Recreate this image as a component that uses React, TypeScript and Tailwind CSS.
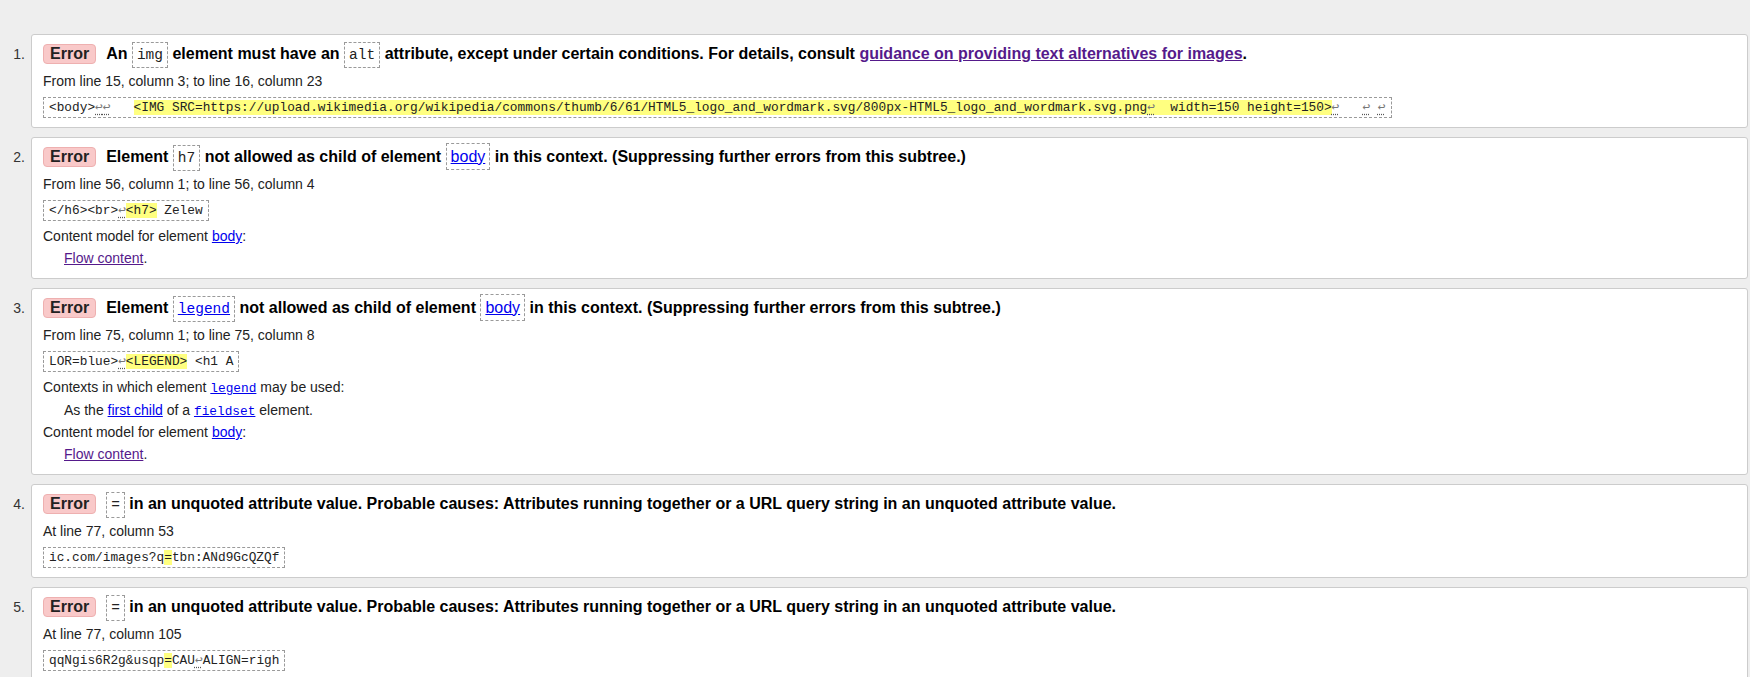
import type { ReactNode } from "react";

// ---- small inline helpers ----
function Nl() {
  return (
    <span className="font-['DejaVu_Sans_Mono',monospace] text-[12.8px] leading-[0] text-[#777] underline decoration-dotted decoration-[#555] underline-offset-[3px]">
      ↩
    </span>
  );
}

function Hl({ children }: { children: ReactNode }) {
  return <span className="bg-[#ffff80]">{children}</span>;
}

// dashed box used inside the bold message line
function Box({ children, mono = true }: { children: ReactNode; mono?: boolean }) {
  return (
    <span
      className={
        mono
          ? "border border-dashed border-[#9a9a9a] px-[4px] py-[4px] font-['Liberation_Mono','DejaVu_Sans_Mono',monospace] text-[14.5px] font-normal text-[#222]"
          : "border border-dashed border-[#9a9a9a] px-[4px] py-[4px] font-normal"
      }
    >
      {children}
    </span>
  );
}

function Extract({ children }: { children: ReactNode }) {
  return (
    <div className="mt-[5px] flex">
      <code className="border border-dashed border-[#9a9a9a] px-[5px] py-[2px] font-['Liberation_Mono','DejaVu_Sans_Mono',monospace] text-[12.8px] leading-[15px] whitespace-pre text-[#222]">
        {children}
      </code>
    </div>
  );
}

const link = "text-[#0000ee] underline";
const visited = "text-[#551a8b] underline";
const monoLink =
  "font-['Liberation_Mono','DejaVu_Sans_Mono',monospace] text-[12.8px] font-normal text-[#0000ee] underline";

type Item = {
  title: ReactNode;
  where: string;
  extract: ReactNode;
  extra?: ReactNode;
};

const items: Item[] = [
  {
    title: (
      <>
        An <Box>img</Box> element must have an <Box>alt</Box> attribute, except under certain conditions. For details, consult <a className={visited}>guidance on providing text alternatives for images</a>.
      </>
    ),
    where: "From line 15, column 3; to line 16, column 23",
    extract: (
      <>
        {"<body>"}
        <Nl />
        <Nl />
        {"   "}
        <Hl>
          {"<IMG SRC=https://upload.wikimedia.org/wikipedia/commons/thumb/6/61/HTML5_logo_and_wordmark.svg/800px-HTML5_logo_and_wordmark.svg.png"}
          <Nl />
          {"  width=150 height=150>"}
        </Hl>
        <Nl />
        {"   "}
        <Nl />
        {" "}
        <Nl />
      </>
    ),
  },
  {
    title: (
      <>
        Element <Box>h7</Box> not allowed as child of element <Box mono={false}><a className={link}>body</a></Box> in this context. (Suppressing further errors from this subtree.)
      </>
    ),
    where: "From line 56, column 1; to line 56, column 4",
    extract: (
      <>
        {"</h6><br>"}
        <Nl />
        <Hl>{"<h7>"}</Hl>
        {" Zelew"}
      </>
    ),
    extra: (
      <>
        <p>
          Content model for element <a className={link}>body</a>:
        </p>
        <p className="pl-[21px]">
          <a className={visited}>Flow content</a>.
        </p>
      </>
    ),
  },
  {
    title: (
      <>
        Element <Box><a className="text-[#0000ee] underline">legend</a></Box> not allowed as child of element <Box mono={false}><a className={link}>body</a></Box> in this context. (Suppressing further errors from this subtree.)
      </>
    ),
    where: "From line 75, column 1; to line 75, column 8",
    extract: (
      <>
        {"LOR=blue>"}
        <Nl />
        <Hl>{"<LEGEND>"}</Hl>
        {" <h1 A"}
      </>
    ),
    extra: (
      <>
        <p>
          Contexts in which element <a className={monoLink}>legend</a> may be used:
        </p>
        <p className="pl-[21px]">
          As the <a className={link}>first child</a> of a <a className={monoLink}>fieldset</a> element.
        </p>
        <p>
          Content model for element <a className={link}>body</a>:
        </p>
        <p className="pl-[21px]">
          <a className={visited}>Flow content</a>.
        </p>
      </>
    ),
  },
  {
    title: (
      <>
        <Box>=</Box> in an unquoted attribute value. Probable causes: Attributes running together or a URL query string in an unquoted attribute value.
      </>
    ),
    where: "At line 77, column 53",
    extract: (
      <>
        {"ic.com/images?q"}
        <Hl>=</Hl>
        {"tbn:ANd9GcQZQf"}
      </>
    ),
  },
  {
    title: (
      <>
        <Box>=</Box> in an unquoted attribute value. Probable causes: Attributes running together or a URL query string in an unquoted attribute value.
      </>
    ),
    where: "At line 77, column 105",
    extract: (
      <>
        {"qqNgis6R2g&usqp"}
        <Hl>=</Hl>
        {"CAU"}
        <Nl />
        {"ALIGN=righ"}
      </>
    ),
  },
];

export default function App() {
  return (
    <div className="min-h-screen bg-[#eeeeee] pt-[34px] pr-[2px] font-['Liberation_Sans',Arial,sans-serif] text-[#222]">
      <ol className="flex flex-col gap-[9px]">
        {items.map((it, i) => (
          <li key={i} className="flex">
            <div className="w-[31px] shrink-0 pt-[10px] pr-[6px] text-right text-[14px] leading-[20px] text-[#333]">
              {i + 1}.
            </div>
            <div className="flex-1 rounded-[3px] border border-[#cccccc] bg-white pt-[9px] pr-3 pb-[9px] pl-[11px]">
              <div className="flex h-[20px] items-center whitespace-nowrap text-[16px] leading-[20px] font-bold text-black">
                <span className="mr-[10px] flex h-[20px] items-center rounded-[4px] border border-[#eeb0b0] bg-[#f9c9c9] px-[6px] text-[#222]">
                  Error
                </span>
                <span>{it.title}</span>
              </div>
              <p className="mt-[7px] text-[14px] leading-[21px]">{it.where}</p>
              <Extract>{it.extract}</Extract>
              {it.extra && (
                <div className="mt-[5px] text-[14px] leading-[21.5px]">{it.extra}</div>
              )}
            </div>
          </li>
        ))}
      </ol>
    </div>
  );
}
